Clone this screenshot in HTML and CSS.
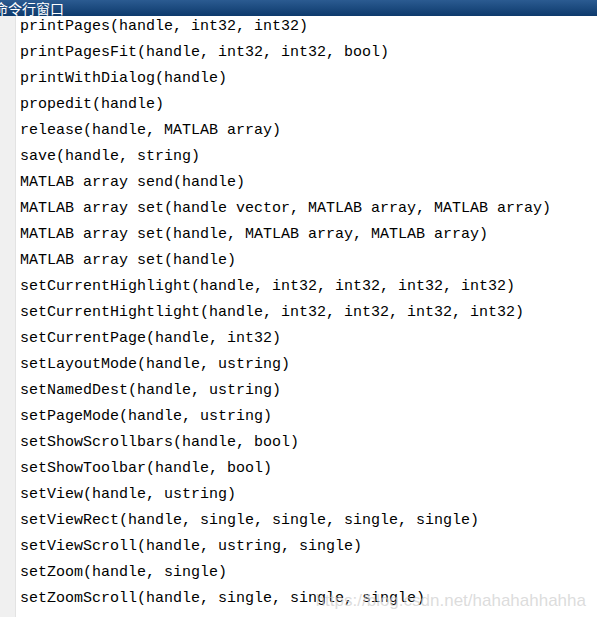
FILE: index.html
```html
<!DOCTYPE html>
<html>
<head>
<meta charset="utf-8">
<link rel="stylesheet" href="styles.css">
</head>
<body>
<div class="window">
  <div class="titlebar"><span class="title">命令行窗口</span></div>
  <div class="body">
    <div class="gutter"></div>
    <div class="lines">
      <div class="line">printPages(handle, int32, int32)</div>
      <div class="line">printPagesFit(handle, int32, int32, bool)</div>
      <div class="line">printWithDialog(handle)</div>
      <div class="line">propedit(handle)</div>
      <div class="line">release(handle, MATLAB array)</div>
      <div class="line">save(handle, string)</div>
      <div class="line">MATLAB array send(handle)</div>
      <div class="line">MATLAB array set(handle vector, MATLAB array, MATLAB array)</div>
      <div class="line">MATLAB array set(handle, MATLAB array, MATLAB array)</div>
      <div class="line">MATLAB array set(handle)</div>
      <div class="line">setCurrentHighlight(handle, int32, int32, int32, int32)</div>
      <div class="line">setCurrentHightlight(handle, int32, int32, int32, int32)</div>
      <div class="line">setCurrentPage(handle, int32)</div>
      <div class="line">setLayoutMode(handle, ustring)</div>
      <div class="line">setNamedDest(handle, ustring)</div>
      <div class="line">setPageMode(handle, ustring)</div>
      <div class="line">setShowScrollbars(handle, bool)</div>
      <div class="line">setShowToolbar(handle, bool)</div>
      <div class="line">setView(handle, ustring)</div>
      <div class="line">setViewRect(handle, single, single, single, single)</div>
      <div class="line">setViewScroll(handle, ustring, single)</div>
      <div class="line">setZoom(handle, single)</div>
      <div class="line">setZoomScroll(handle, single, single, single)</div>
    </div>
    <div class="watermark">https://blog.csdn.net/hahahahhahha</div>
  </div>
</div>
</body>
</html>
```
FILE: styles.css
```css
html, body {
  margin: 0;
  padding: 0;
  background: #ffffff;
}
.window {
  width: 597px;
  height: 617px;
  overflow: hidden;
  display: flex;
  flex-direction: column;
}
.titlebar {
  height: 16px;
  flex: none;
  background: linear-gradient(#2b5b91, #0d3a6c);
  overflow: hidden;
  display: flex;
  align-items: center;
}
.title {
  color: #ffffff;
  font-family: "Noto Sans CJK SC", sans-serif;
  font-size: 14px;
  line-height: 16px;
  margin-left: -6px;
  white-space: nowrap;
}
.body {
  flex: 1;
  display: flex;
  position: relative;
}
.gutter {
  width: 15px;
  flex: none;
  background: #f0f0f0;
  border-right: 1px solid #e3e3e3;
}
.lines {
  padding-left: 4px;
  margin-top: -2px;
  font-family: "Liberation Mono", "DejaVu Sans Mono", monospace;
  font-size: 15px;
  color: #000000;
}
.line {
  height: 26px;
  line-height: 26px;
  white-space: pre;
}
.watermark {
  position: absolute;
  right: 11px;
  bottom: 6px;
  font-family: "Liberation Sans", Arial, sans-serif;
  font-size: 17px;
  color: rgba(205, 205, 205, 0.7);
  white-space: nowrap;
}
```
